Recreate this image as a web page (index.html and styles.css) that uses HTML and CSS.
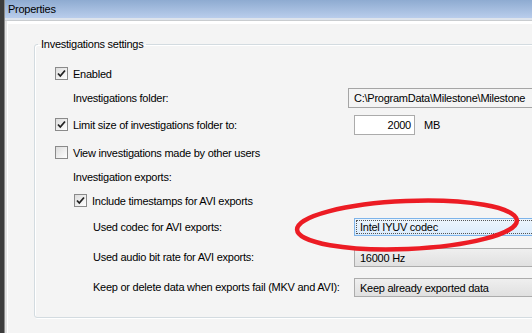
FILE: index.html
```html
<!DOCTYPE html>
<html>
<head>
<meta charset="utf-8">
<link rel="stylesheet" href="styles.css">
</head>
<body>
<div class="frame-edge"></div>
<div class="window">
  <div class="titlebar">Properties</div>
  <div class="titlesep"></div>
  <div class="panel">
    <div class="panel-inner">
      <fieldset class="group">
        <legend class="group-title">Investigations settings</legend>
        <div class="row r1">
          <span class="cb checked"><svg viewBox="0 0 13 13" width="13" height="13"><path d="M3 6.5 L5.3 9 L10 3.5" fill="none" stroke="#222" stroke-width="1.8"/></svg></span>
          <span class="lbl">Enabled</span>
        </div>
        <div class="row r2">
          <span class="lbl text-col">Investigations folder:</span>
          <div class="field path">C:\ProgramData\Milestone\Milestone</div>
        </div>
        <div class="row r3">
          <span class="cb checked"><svg viewBox="0 0 13 13" width="13" height="13"><path d="M3 6.5 L5.3 9 L10 3.5" fill="none" stroke="#222" stroke-width="1.8"/></svg></span>
          <span class="lbl text-col-cb">Limit size of investigations folder to:</span>
          <div class="field num">2000</div>
          <span class="unit">MB</span>
        </div>
        <div class="row r4">
          <span class="cb"></span>
          <span class="lbl">View investigations made by other users</span>
        </div>
        <div class="row r5">
          <span class="lbl text-col">Investigation exports:</span>
        </div>
        <div class="row r6 sub">
          <span class="cb checked"><svg viewBox="0 0 13 13" width="13" height="13"><path d="M3 6.5 L5.3 9 L10 3.5" fill="none" stroke="#222" stroke-width="1.8"/></svg></span>
          <span class="lbl">Include timestamps for AVI exports</span>
        </div>
        <div class="row r7 sub2">
          <span class="lbl text-col2">Used codec for AVI exports:</span>
          <div class="combo focus"><span class="focus-rect">Intel IYUV codec</span></div>
        </div>
        <div class="row r8 sub2">
          <span class="lbl text-col2">Used audio bit rate for AVI exports:</span>
          <div class="combo">16000 Hz</div>
        </div>
        <div class="row r9 sub2">
          <span class="lbl text-col2">Keep or delete data when exports fail (MKV and AVI):</span>
          <div class="combo">Keep already exported data</div>
        </div>
      </fieldset>
    </div>
  </div>
</div>
<svg class="highlight" width="240" height="66" viewBox="0 0 240 66">
  <ellipse cx="118" cy="32" rx="110" ry="24" transform="rotate(-2.4 118 32)" fill="none" stroke="#ec1c24" stroke-width="4.5"/>
</svg>
</body>
</html>
```
FILE: styles.css
```css
html, body {
  margin: 0;
  padding: 0;
}
body {
  width: 532px;
  height: 333px;
  overflow: hidden;
  display: flex;
  background: #f4f4f4;
  font-family: "Liberation Sans", Arial, sans-serif;
  font-size: 11px;
  letter-spacing: -0.25px;
  color: #000;
  position: relative;
}
.frame-edge {
  width: 4px;
  background: #3c3c3c;
  border-right: 1px solid #8a8a8a;
  flex: none;
}
.window {
  flex: 1;
  display: flex;
  flex-direction: column;
  min-width: 0;
}
.titlebar {
  height: 18px;
  line-height: 18px;
  padding-left: 3px;
  background: linear-gradient(#8eabd1, #b9cdec);
  flex: none;
}
.titlesep {
  height: 2px;
  background: #dde3ec;
  border-bottom: 1px solid #c9cccf;
  flex: none;
}
.panel {
  flex: 1;
  border-left: 2px solid #e3e3e3;
  display: flex;
}
.panel-inner {
  flex: 1;
  border-left: 1px solid #ffffff;
  border-top: 3px solid #ffffff;
  background: #f4f4f4;
  padding: 14px 0 0 26px;
}
.group {
  margin: 0;
  width: 640px;
  height: 280px;
  box-sizing: border-box;
  border: 1px solid #d3dbe0;
  border-radius: 3px;
  box-shadow: 1px 1px 0 #ffffff, inset 1px 1px 0 #ffffff;
  padding: 0 0 0 20px;
  display: flex;
  flex-direction: column;
}
.group-title {
  margin-left: -17px;
  padding: 0 3px;
  line-height: 13px;
}
.row {
  display: flex;
  align-items: center;
  flex: none;
}
.r1 { height: 21px; margin-top: 12px; }
.r2 { height: 28px; }
.r3 { height: 25px; }
.r4 { height: 31px; }
.r5 { height: 18px; }
.r6 { height: 29px; }
.r7 { height: 24px; }
.r8 { height: 36px; }
.r9 { height: 24px; }
.sub { padding-left: 19px; }
.cb {
  width: 11px;
  height: 11px;
  border: 1px solid #8a8a8a;
  background: linear-gradient(135deg, #dcdcdc, #ffffff);
  flex: none;
  position: relative;
  display: flex;
}
.cb svg { position: absolute; left: -1px; top: -1px; }
.lbl {
  margin-left: 5px;
  white-space: nowrap;
}
.text-col { margin-left: 18px; width: 278px; }
.text-col-cb { width: 281px; }
.text-col2 { margin-left: 38px; width: 261px; }
.field {
  height: 18px;
  line-height: 18px;
  border: 1px solid #a5a5a5;
  box-sizing: content-box;
  white-space: nowrap;
  overflow: hidden;
}
.path {
  margin-left: -3px;
  width: 300px;
  background: #f4f4f4;
  padding-left: 5px;
}
.num {
  width: 56px;
  background: #ffffff;
  text-align: right;
  padding-right: 3px;
  border-color: #ababab;
}
.unit { margin-left: 9px; }
.combo {
  width: 240px;
  height: 18px;
  line-height: 18px;
  box-sizing: border-box;
  padding-left: 5px;
  border: 1px solid #acacac;
  background: linear-gradient(#efefef, #e0e0e0);
  white-space: nowrap;
  flex: none;
}
.r8 .combo, .r9 .combo { height: 19px; }
.combo.focus {
  border-color: #7eb4ea;
  background: linear-gradient(#ecf4fc, #dcecfc);
  padding: 1px;
  display: flex;
}
.focus-rect {
  flex: 1;
  border: 1px dotted #555;
  line-height: 12px;
  padding-left: 3px;
}
.highlight {
  position: absolute;
  left: 289px;
  top: 193px;
}
```
